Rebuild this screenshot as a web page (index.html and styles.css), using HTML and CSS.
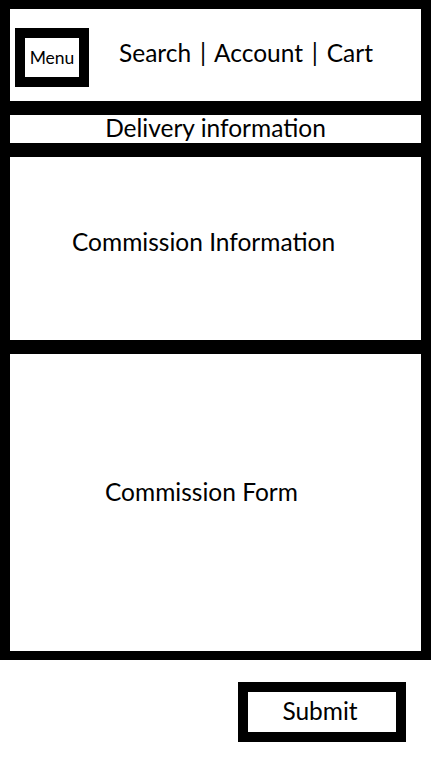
FILE: index.html
```html
<!DOCTYPE html>
<html lang="en">
<head>
<meta charset="utf-8">
<title>Commission</title>
<link rel="stylesheet" href="styles.css">
</head>
<body>
<div class="frame">
  <header class="header">
    <div class="menu"><span>Menu</span></div>
    <nav class="nav">Search | Account | Cart</nav>
  </header>
  <div class="delivery">Delivery information</div>
  <section class="panel info"><span>Commission Information</span></section>
  <section class="panel form"><span>Commission Form</span></section>
</div>
<div class="actions">
  <button class="submit">Submit</button>
</div>
</body>
</html>
```
FILE: styles.css
```css
html, body {
  margin: 0;
  padding: 0;
  background: #fff;
}
body {
  width: 431px;
  font-family: Lato, "Open Sans", sans-serif;
  color: #000;
}
.frame {
  background: #000;
  padding: 9px 10px;
  display: flex;
  flex-direction: column;
  gap: 14px;
}
.header {
  background: #fff;
  height: 92px;
  display: flex;
  align-items: flex-start;
  padding: 19px 0 0 5px;
  box-sizing: border-box;
}
.menu {
  width: 54px;
  height: 39px;
  border: 10px solid #000;
  display: flex;
  align-items: center;
  justify-content: center;
  font-size: 17.5px;
}
.nav {
  margin-left: 30px;
  margin-top: 11px;
  font-size: 24.5px;
  line-height: 28px;
  word-spacing: 2.5px;
}
.delivery {
  background: #fff;
  height: 28px;
  font-size: 24.5px;
  line-height: 25px;
  text-align: center;
}
.panel {
  background: #fff;
  display: flex;
  align-items: center;
  box-sizing: border-box;
  font-size: 24.5px;
  line-height: 28px;
}
.info {
  height: 183px;
  padding: 0 0 14px 62px;
}
.form {
  height: 297px;
  padding: 0 0 22px 95px;
}
.actions {
  padding: 22px 0 0 238px;
}
.submit {
  width: 168px;
  height: 60px;
  border: 10px solid #000;
  background: #fff;
  font-family: Lato, "Open Sans", sans-serif;
  font-size: 24.5px;
  line-height: 28px;
  color: #000;
  padding: 0 4px 2px 0;
  margin: 0;
  border-radius: 0;
  box-sizing: border-box;
}
```
